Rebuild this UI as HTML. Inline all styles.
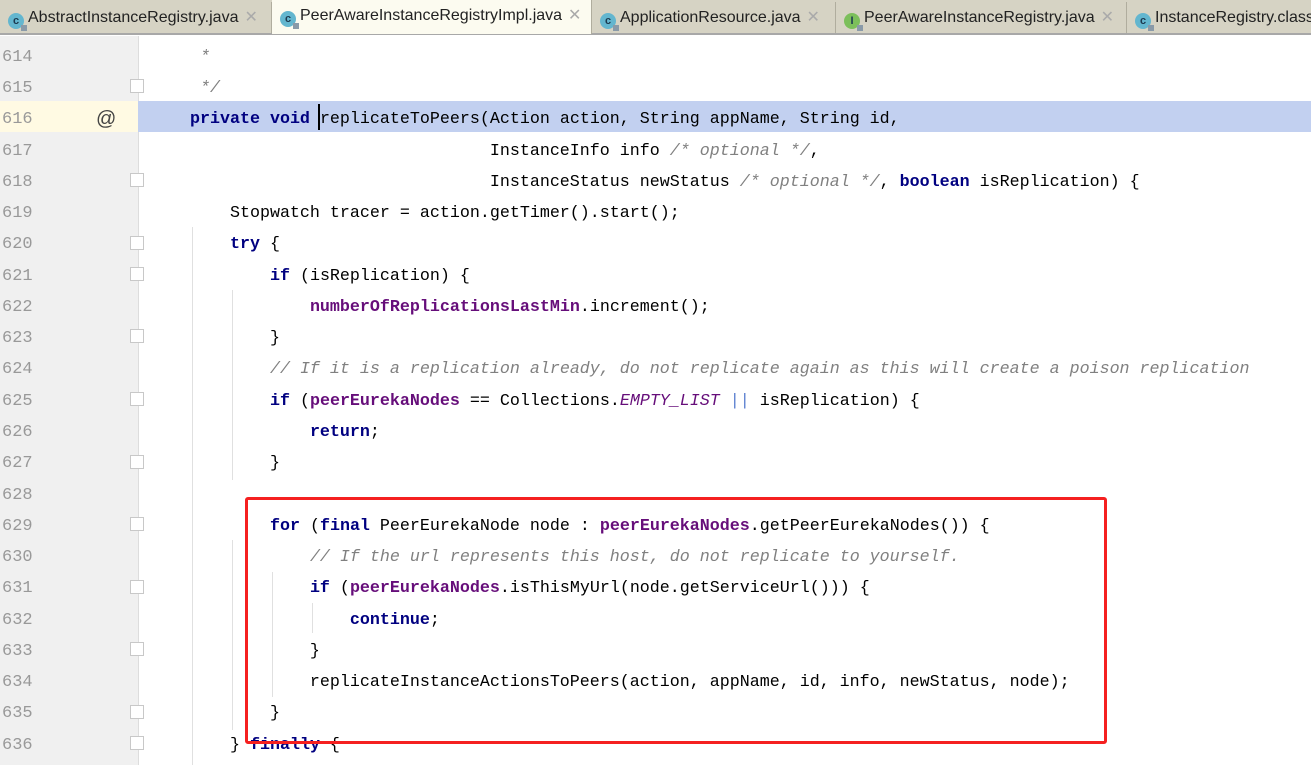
<!DOCTYPE html>
<html><head><meta charset="utf-8"><style>
body{margin:0;width:1311px;height:765px;overflow:hidden;background:#fff;font-family:"Liberation Mono",monospace;position:relative}
#tabs{position:absolute;left:0;top:0;width:1311px;height:33px;background:#d6d3c4;border-bottom:2px solid #a8a8a8}
.tab{position:absolute;top:2px;height:31px;border-right:1px solid #b0ad9e;font:16px "Liberation Sans",sans-serif;line-height:31px;color:#222;white-space:nowrap;overflow:hidden}
.tab.act{background:#fcfbf0;top:0;height:34px}
.ic{display:inline-block;width:16px;height:16px;border-radius:50%;background:#63b6cf;color:#1c3a50;font-size:11px;line-height:16px;text-align:center;vertical-align:-2px;margin:0 4px 0 8px;position:relative;font-weight:bold}
.ic.i{background:#7cbf5b}
.ic:after{content:"";position:absolute;right:-3px;bottom:-2px;width:6px;height:6px;background:#8a9aa8}
.x{color:#aaa;margin-left:6px}
#gut{position:absolute;left:0;top:36px;width:138px;height:729px;background:#f0f0f0}
#gline{position:absolute;left:138px;top:36px;width:1px;height:729px;background:#ddd}
.row{position:absolute;left:0;width:1311px;height:31.27px;line-height:31.27px;font-size:16.67px;white-space:pre}
.ln{position:absolute;left:2px;color:#999;font-size:17px;font-family:"Liberation Mono",monospace}
.code{position:absolute;left:150px;color:#000}
.k{color:#000080;font-weight:bold}
.f{color:#660e7a;font-weight:bold}
.c{color:#808080;font-style:italic}
.s{color:#660e7a;font-style:italic}
.fold{position:absolute;left:130px;width:14px;height:14px;border:1px solid #c8c8c8;background:#fff;box-sizing:border-box}
.g{position:absolute;width:1px;background:#e0e0e0}
</style></head><body>
<div id="tabs">
<div class="tab" style="left:0;width:271px"><span class="ic">c</span>AbstractInstanceRegistry.java<span class="x">✕</span></div>
<div class="tab act" style="left:272px;width:319px"><span class="ic">c</span>PeerAwareInstanceRegistryImpl.java<span class="x">✕</span></div>
<div class="tab" style="left:592px;width:243px"><span class="ic">c</span>ApplicationResource.java<span class="x">✕</span></div>
<div class="tab" style="left:836px;width:290px"><span class="ic i">I</span>PeerAwareInstanceRegistry.java<span class="x">✕</span></div>
<div class="tab" style="left:1127px;width:184px;border:none"><span class="ic">c</span>InstanceRegistry.class</div>
</div>
<div id="gut"></div><div id="gline"></div>
<div style="position:absolute;left:0;top:101px;width:138px;height:31px;background:#fffae3"></div>
<div style="position:absolute;left:138px;top:101px;width:1173px;height:31px;background:#c2d0f0"></div>
<div class="g" style="left:192px;top:227px;height:538px"></div>
<div class="g" style="left:232px;top:290px;height:190px"></div>
<div class="g" style="left:232px;top:540px;height:190px"></div>
<div class="g" style="left:272px;top:572px;height:125px"></div>
<div class="g" style="left:312px;top:603px;height:30px"></div>
<div class="row" style="top:41.7px"><span class="ln">614</span><span class="code">     <span class="c">*</span></span></div>
<div class="row" style="top:73px"><span class="ln">615</span><span class="code">     <span class="c">*/</span></span></div>
<div class="row" style="top:104.2px"><span class="ln">616</span><span style="position:absolute;left:96px;color:#444;font-family:'Liberation Sans';font-size:20px">@</span><span class="code">    <span class="k">private void </span>replicateToPeers(Action action, String appName, String id,</span></div>
<div class="row" style="top:135.5px"><span class="ln">617</span><span class="code">                                  InstanceInfo info <span class="c">/* optional */</span>,</span></div>
<div class="row" style="top:166.8px"><span class="ln">618</span><span class="code">                                  InstanceStatus newStatus <span class="c">/* optional */</span>, <span class="k">boolean</span> isReplication) {</span></div>
<div class="row" style="top:198px"><span class="ln">619</span><span class="code">        Stopwatch tracer = action.getTimer().start();</span></div>
<div class="row" style="top:229.3px"><span class="ln">620</span><span class="code">        <span class="k">try</span> {</span></div>
<div class="row" style="top:260.6px"><span class="ln">621</span><span class="code">            <span class="k">if</span> (isReplication) {</span></div>
<div class="row" style="top:291.9px"><span class="ln">622</span><span class="code">                <span class="f">numberOfReplicationsLastMin</span>.increment();</span></div>
<div class="row" style="top:323.1px"><span class="ln">623</span><span class="code">            }</span></div>
<div class="row" style="top:354.4px"><span class="ln">624</span><span class="code">            <span class="c">// If it is a replication already, do not replicate again as this will create a poison replication</span></span></div>
<div class="row" style="top:385.7px"><span class="ln">625</span><span class="code">            <span class="k">if</span> (<span class="f">peerEurekaNodes</span> == Collections.<span class="s">EMPTY_LIST</span> <span style="color:#5b7fd0">||</span> isReplication) {</span></div>
<div class="row" style="top:416.9px"><span class="ln">626</span><span class="code">                <span class="k">return</span>;</span></div>
<div class="row" style="top:448.2px"><span class="ln">627</span><span class="code">            }</span></div>
<div class="row" style="top:479.5px"><span class="ln">628</span></div>
<div class="row" style="top:510.8px"><span class="ln">629</span><span class="code">            <span class="k">for</span> (<span class="k">final</span> PeerEurekaNode node : <span class="f">peerEurekaNodes</span>.getPeerEurekaNodes()) {</span></div>
<div class="row" style="top:542px"><span class="ln">630</span><span class="code">                <span class="c">// If the url represents this host, do not replicate to yourself.</span></span></div>
<div class="row" style="top:573.3px"><span class="ln">631</span><span class="code">                <span class="k">if</span> (<span class="f">peerEurekaNodes</span>.isThisMyUrl(node.getServiceUrl())) {</span></div>
<div class="row" style="top:604.6px"><span class="ln">632</span><span class="code">                    <span class="k">continue</span>;</span></div>
<div class="row" style="top:635.8px"><span class="ln">633</span><span class="code">                }</span></div>
<div class="row" style="top:667.1px"><span class="ln">634</span><span class="code">                replicateInstanceActionsToPeers(action, appName, id, info, newStatus, node);</span></div>
<div class="row" style="top:698.4px"><span class="ln">635</span><span class="code">            }</span></div>
<div class="row" style="top:729.7px"><span class="ln">636</span><span class="code">        } <span class="k">finally</span> {</span></div>
<div class="fold" style="top:79px"></div>
<div class="fold" style="top:173px"></div>
<div class="fold" style="top:236px"></div>
<div class="fold" style="top:267px"></div>
<div class="fold" style="top:329px"></div>
<div class="fold" style="top:392px"></div>
<div class="fold" style="top:455px"></div>
<div class="fold" style="top:517px"></div>
<div class="fold" style="top:580px"></div>
<div class="fold" style="top:642px"></div>
<div class="fold" style="top:705px"></div>
<div class="fold" style="top:736px"></div>
<div style="position:absolute;left:318px;top:104px;width:2px;height:26px;background:#000"></div>
<div style="position:absolute;left:245px;top:497px;width:862px;height:247px;border:3px solid #f52020;border-radius:3px;box-sizing:border-box"></div>
</body></html>
